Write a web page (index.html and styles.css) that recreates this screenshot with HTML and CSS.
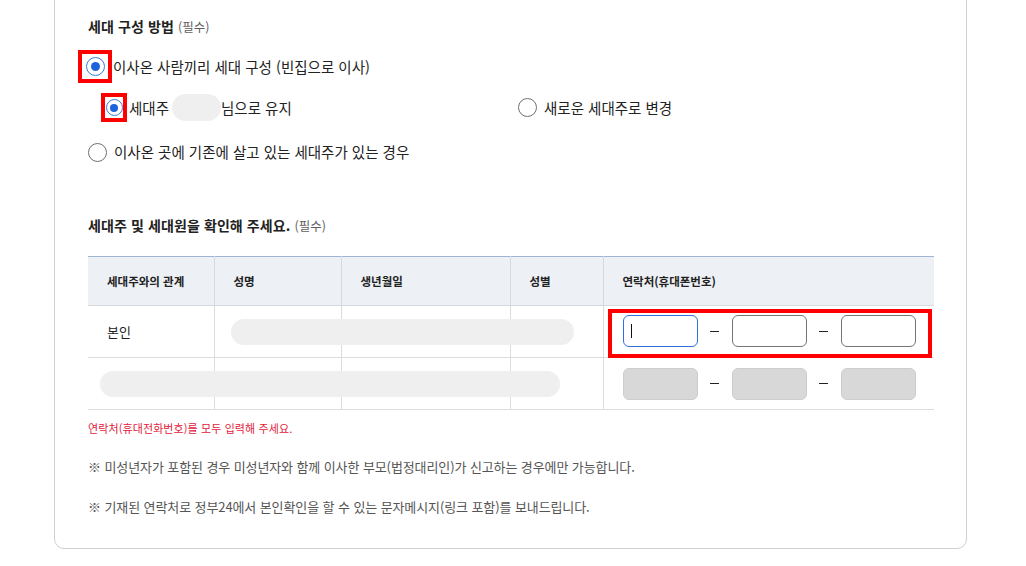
FILE: index.html
```html
<!DOCTYPE html>
<html lang="ko">
  <head>
    <meta charset="utf-8">
    <title>세대 구성 방법</title>
    <link rel="stylesheet" href="styles.css">
  </head>
  <body>
    <div class="card">
      <h3 class="section-title">세대 구성 방법 <span class="required">(필수)</span></h3>

      <div class="options">
        <label class="option option-main">
          <span class="mark mark-lg"><span class="radio checked"></span></span>
          <span class="option-text">이사온 사람끼리 세대 구성 (빈집으로 이사)</span>
        </label>

        <div class="sub-options">
          <label class="option option-sub">
            <span class="mark mark-sm"><span class="radio radio-sm checked"></span></span>
            <span class="option-text">세대주</span>
            <span class="name-blur"></span>
            <span class="option-text">님으로 유지</span>
          </label>
          <label class="option option-alt">
            <span class="radio"></span>
            <span class="option-text">새로운 세대주로 변경</span>
          </label>
        </div>

        <label class="option option-last">
          <span class="radio"></span>
          <span class="option-text">이사온 곳에 기존에 살고 있는 세대주가 있는 경우</span>
        </label>
      </div>

      <h3 class="section-title second">세대주 및 세대원을 확인해 주세요. <span class="required">(필수)</span></h3>

      <table class="members">
        <colgroup>
          <col style="width:126px">
          <col style="width:127px">
          <col style="width:169px">
          <col style="width:93px">
          <col>
        </colgroup>
        <thead>
          <tr>
            <th>세대주와의 관계</th>
            <th>성명</th>
            <th>생년월일</th>
            <th>성별</th>
            <th>연락처(휴대폰번호)</th>
          </tr>
        </thead>
        <tbody>
          <tr>
            <td>본인</td>
            <td class="blur-cell"><span class="row-blur blur-1"></span></td>
            <td></td>
            <td></td>
            <td class="phone-cell">
              <div class="phone-group highlight">
                <div class="phone-box focused"><span class="caret"></span></div>
                <span class="dash"></span>
                <div class="phone-box"></div>
                <span class="dash"></span>
                <div class="phone-box"></div>
              </div>
            </td>
          </tr>
          <tr>
            <td class="blur-cell"><span class="row-blur blur-2"></span></td>
            <td></td>
            <td></td>
            <td></td>
            <td class="phone-cell plain">
              <div class="phone-group">
                <div class="phone-box disabled"></div>
                <span class="dash"></span>
                <div class="phone-box disabled"></div>
                <span class="dash"></span>
                <div class="phone-box disabled"></div>
              </div>
            </td>
          </tr>
        </tbody>
      </table>

      <p class="error">연락처(휴대전화번호)를 모두 입력해 주세요.</p>
      <p class="note">※ 미성년자가 포함된 경우 미성년자와 함께 이사한 부모(법정대리인)가 신고하는 경우에만 가능합니다.</p>
      <p class="note">※ 기재된 연락처로 정부24에서 본인확인을 할 수 있는 문자메시지(링크 포함)를 보내드립니다.</p>
    </div>
  </body>
</html>
```

FILE: styles.css
```css
body {
  margin: 0;
  background: #fff;
  font-family: "Noto Sans CJK KR", "Noto Sans", sans-serif;
  color: #222;
}

.card {
  width: 913px;
  box-sizing: border-box;
  margin: -10px 0 0 54px;
  padding: 24px 32px 31px 33px;
  border: 1px solid #cfcfcf;
  border-radius: 10px;
}

.section-title {
  margin: 0;
  height: 22px;
  font-size: 14px;
  font-weight: 700;
  line-height: 22px;
  letter-spacing: 0.1px;
}

.section-title.second {
  margin-top: 52px;
}

.required {
  font-size: 12.5px;
  font-weight: 400;
  line-height: 1;
  color: #5f5f5f;
  letter-spacing: 0;
}

/* radio options */
.options {
  font-size: 14.5px;
}

.option {
  display: flex;
  align-items: center;
}

.option-main {
  margin: 13px 0 0 -10px;
  height: 33px;
}

.sub-options {
  display: flex;
  margin-top: 10px;
  padding-left: 13px;
}

.option-sub {
  width: 417px;
  height: 29px;
}

.option-alt {
  gap: 7px;
}

.option-last {
  margin-top: 20px;
  height: 20px;
  gap: 7px;
}

.option-text {
  line-height: 20px;
  white-space: nowrap;
}

.mark {
  display: flex;
  align-items: center;
  justify-content: center;
  box-sizing: border-box;
  border: 4px solid #ff0000;
}

.mark-lg {
  width: 34px;
  height: 33px;
  margin-right: 1px;
}

.mark-sm {
  width: 26px;
  height: 29px;
  margin-right: 2px;
}

.radio {
  display: inline-block;
  box-sizing: border-box;
  width: 19px;
  height: 19px;
  border: 1px solid #6f6f6f;
  border-radius: 50%;
  background: #fff;
  position: relative;
  flex-shrink: 0;
}

.radio-sm {
  width: 17px;
  height: 17px;
}

.radio.checked {
  border: 1.5px solid #3a78e0;
}

.radio.checked::after {
  content: "";
  position: absolute;
  left: 50%;
  top: 50%;
  width: 9px;
  height: 9px;
  margin: -4.5px 0 0 -4.5px;
  border-radius: 50%;
  background: #1d63db;
}

.radio-sm.checked::after {
  width: 8px;
  height: 8px;
  margin: -4px 0 0 -4px;
}

.name-blur {
  display: inline-block;
  width: 49px;
  height: 27px;
  margin-left: 3px;
  border-radius: 14px;
  background: #efefef;
  filter: blur(0.6px);
}

/* members table */
.members {
  width: 846px;
  margin-top: 20px;
  border-collapse: collapse;
  table-layout: fixed;
  border-top: 1px solid #9fb4d3;
}

.members th {
  height: 48px;
  padding: 0 0 0 19px;
  background: #edf0f5;
  border-left: 1px solid #d6d9de;
  border-bottom: 1px solid #d6d9de;
  text-align: left;
  font-size: 11.5px;
  font-weight: 700;
  color: #222;
}

.members td {
  height: 51px;
  padding: 0 0 0 19px;
  border-left: 1px solid #dcdcdc;
  border-bottom: 1px solid #dcdcdc;
  font-size: 13px;
  vertical-align: middle;
}

.members th:first-child,
.members td:first-child {
  border-left: none;
}

.blur-cell {
  position: relative;
}

.row-blur {
  position: absolute;
  height: 26px;
  top: 50%;
  margin-top: -13px;
  border-radius: 13px;
  background: #efefef;
  filter: blur(0.6px);
}

.blur-1 {
  left: 16px;
  width: 343px;
}

.blur-2 {
  left: 12px;
  width: 460px;
}

.members td.phone-cell {
  padding: 0 0 0 4px;
}

.members td.phone-cell.plain {
  padding-left: 19px;
}

.phone-group {
  display: flex;
  align-items: center;
}

.phone-group.highlight {
  position: relative;
  z-index: 1;
  width: 324px;
  height: 49px;
  box-sizing: border-box;
  border: 4px solid #ff0000;
  padding: 0 0 4px 11px;
  margin: 1px 0 -2px 0;
}

.phone-box {
  box-sizing: border-box;
  width: 75px;
  height: 32px;
  border: 1px solid #757575;
  border-radius: 6px;
  background: #fff;
  display: flex;
  align-items: center;
  padding-left: 7px;
}

.phone-box.focused {
  border: 1.5px solid #2f6fe0;
}

.phone-box.disabled {
  background: #d8d8d8;
  border-color: #cdcdcd;
}

.caret {
  width: 1px;
  height: 14px;
  background: #111;
}

.dash {
  width: 34px;
  display: flex;
  justify-content: center;
}

.dash::before {
  content: "";
  width: 9px;
  height: 1px;
  background: #222;
}

.error {
  margin: 9px 0 0;
  font-size: 11px;
  line-height: 18px;
  letter-spacing: 0.1px;
  color: #e3213a;
}

.note {
  margin: 20px 0 0;
  font-size: 13px;
  line-height: 20px;
  letter-spacing: -0.1px;
  color: #555;
}
```
